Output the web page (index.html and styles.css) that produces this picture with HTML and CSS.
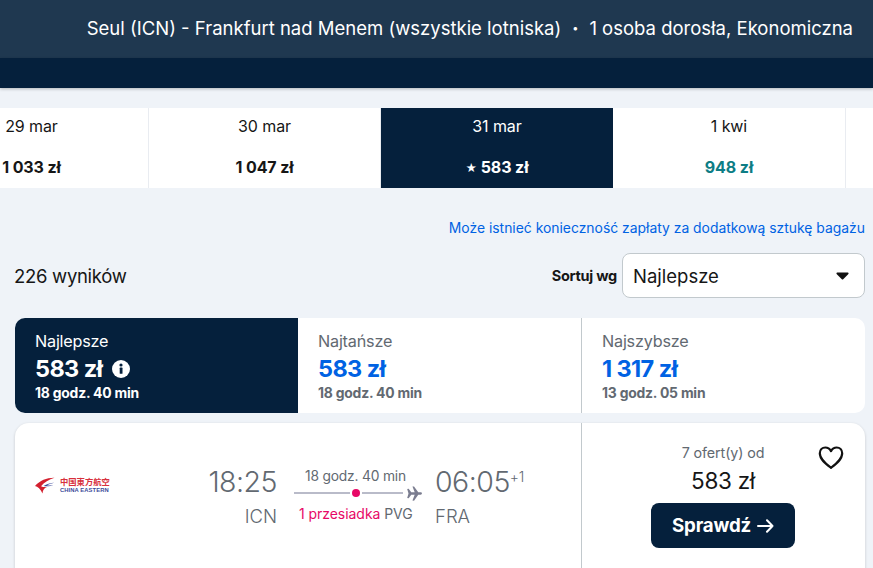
FILE: index.html
```html
<!DOCTYPE html>
<html lang="pl">
<head>
<meta charset="utf-8">
<title>Seul - Frankfurt</title>
<link rel="stylesheet" href="styles.css">
</head>
<body>
<header class="hdr">
  <div class="hdr-top">
    <span>Seul (ICN) - Frankfurt nad Menem (wszystkie lotniska)</span>
    <span class="dot">•</span>
    <span>1 osoba dorosła, Ekonomiczna</span>
  </div>
  <div class="hdr-bottom"></div>
</header>
<nav class="cal">
  <div class="day first"><div class="d">29 mar</div><div class="p">1 033 zł</div></div>
  <div class="day"><div class="d">30 mar</div><div class="p">1 047 zł</div></div>
  <div class="day sel"><div class="d">31 mar</div><div class="p"><span class="star">★</span> 583 zł</div></div>
  <div class="day wide"><div class="d">1 kwi</div><div class="p green">948 zł</div></div>
  <div class="day last"></div>
</nav>
<main class="main">
  <div class="bag"><a class="bag-link">Może istnieć konieczność zapłaty za dodatkową sztukę bagażu</a></div>
  <div class="bar">
    <div class="count">226 wyników</div>
    <div class="sort">
      <span class="sort-l">Sortuj wg</span>
      <div class="select"><span>Najlepsze</span>
        <svg class="caret" width="13" height="8" viewBox="0 0 13 8"><path d="M1.2.6h10.6c.7 0 1 .8.6 1.300L7.200 7.200c-.4.4-1 .4-1.400 0L.6 1.900C.2 1.400.5.6 1.200.6z" fill="#111"/></svg>
      </div>
    </div>
  </div>
  <div class="tabs">
    <div class="tab on">
      <div class="t-name">Najlepsze</div>
      <div class="t-price">583 zł
        <svg class="info" width="18" height="18" viewBox="0 0 18 18"><circle cx="9" cy="9" r="9" fill="#fff"/><rect x="7.700" y="7.600" width="2.800" height="6.200" rx=".6" fill="#05203c"/><circle cx="9" cy="5" r="1.600" fill="#05203c"/></svg>
      </div>
      <div class="t-time">18 godz. 40 min</div>
    </div>
    <div class="tab">
      <div class="t-name">Najtańsze</div>
      <div class="t-price">583 zł</div>
      <div class="t-time">18 godz. 40 min</div>
    </div>
    <div class="tab line">
      <div class="t-name">Najszybsze</div>
      <div class="t-price">1 317 zł</div>
      <div class="t-time">13 godz. 05 min</div>
    </div>
  </div>
  <article class="card">
    <div class="leg">
      <div class="logo">
        <svg class="wing" width="20" height="17" viewBox="0 0 20 17">
          <path d="M19.500.8C12 .6 5 3.500 0 9c2.800.6 5.500 3 7.500 7.500C7.700 13 9.500 10.800 12 10c-2.500.3-4.500 0-6-.8 3-4 8-6.500 13.500-8.400z" fill="#d3202f"/>
          <path d="M19.500 5.800c-4 .2-8 1.400-11 3.300 3.500.6 7 .2 10-1.100-2.600.6-4.800.6-6.500.2 2-1.100 4.800-1.900 7.500-2.400z" fill="#3c4a9a"/>
        </svg>
        <div class="logo-t">
          <div class="cn">中国東方航空</div>
          <div class="en">CHINA EASTERN</div>
        </div>
      </div>
      <div class="times">
        <div class="end right">
          <div class="time">18:25</div>
          <div class="code">ICN</div>
        </div>
        <div class="route">
          <div class="dur">18 godz. 40 min</div>
          <div class="track">
            <span class="seg s1"></span><span class="stop"></span><span class="seg s2"></span>
            <svg class="plane" width="15" height="15" viewBox="0 0 16 16"><path d="M.2 3.200 1.800 3l2.700 3.700H8.200L5.800.6 7.500.4l4.500 6.300h2.500c.9 0 1.400.6 1.400 1.300s-.5 1.300-1.400 1.300H12L7.500 15.600l-1.700-.2 2.400-6.100H4.500L1.800 13l-1.600-.2L1.600 8z" fill="#7b7d90"/></svg>
          </div>
          <div class="stops"><span class="pink">1 przesiadka</span> PVG</div>
        </div>
        <div class="end last-end">
          <div class="time">06:05<sup class="plus">+1</sup></div>
          <div class="code">FRA</div>
        </div>
      </div>
    </div>
    <div class="offer">
      <svg class="heart" width="26" height="25" viewBox="0 0 26 25"><path d="M13 22.800C8 19 1.800 14.500 1.800 8.300c0-3.500 2.600-5.800 5.500-5.800 2.500 0 4.500 1.400 5.700 3.600 1.200-2.200 3.200-3.600 5.700-3.600 2.900 0 5.500 2.300 5.500 5.800 0 6.200-6.200 10.700-11.200 14.500z" fill="none" stroke="#111" stroke-width="2.200" stroke-linejoin="round"/></svg>
      <div class="ofr">7 ofert(y) od</div>
      <div class="ofr-price">583 zł</div>
      <button class="btn">Sprawdź
        <svg width="17" height="14" viewBox="0 0 17 14"><path d="M1 7h14.500M10 1.200 15.500 7 10 12.800" fill="none" stroke="#fff" stroke-width="2" stroke-linecap="round" stroke-linejoin="round"/></svg>
      </button>
    </div>
  </article>
</main>
</body>
</html>
```
FILE: styles.css
```css
* { box-sizing: border-box; }
html, body { margin: 0; height: 568px; overflow: hidden; }
body { background: #eff3f8; font-family: Inter, "Liberation Sans", sans-serif; color: #161616; }
.hdr-top { height: 58px; background: #1f3850; color: #fff; display: flex; justify-content: flex-end; align-items: center; gap: 11px; padding: 0 20px 3px 0; font-size: 18.500px; white-space: nowrap; }
.hdr-top .dot { font-size: 11px; }
.hdr-bottom { height: 30px; background: #05203c; box-shadow: 0 1px 3px rgba(0,0,0,.25); }
.cal { display: flex; margin-top: 20px; height: 80px; background: #fff; }
.day { width: 232px; border-right: 1px solid #e9ecf1; text-align: center; display: flex; flex-direction: column; flex: none; }
.day.first { width: 149px; padding-right: 85px; }
.day.wide { width: 233px; }
.day.last { flex: 1; border-right: 0; }
.day.sel { background: #05203c; color: #fff; border-right: 0; }
.d { font-size: 16px; height: 37px; padding-top: 8px; white-space: nowrap; letter-spacing: -.1px; }
.p { font-size: 16px; font-weight: 700; padding-top: 12px; letter-spacing: -.1px; white-space: nowrap; }
.star { font-size: 11px; vertical-align: 1px; }
.green { color: #0d7d85; }
.main { padding: 0 8px 0 15px; }
.bag { text-align: right; padding-top: 31px; font-size: 13.900px; line-height: 18px; }
.bag-link { color: #0062e3; }
.bar { display: flex; justify-content: space-between; align-items: center; margin-top: 16px; height: 45px; }
.count { font-size: 18.500px; letter-spacing: -.3px; margin-left: -1px; }
.sort { display: flex; align-items: center; gap: 5px; }
.sort-l { font-size: 14.500px; font-weight: 700; letter-spacing: -.25px; }
.select { width: 243px; height: 45px; background: #fff; border: 1px solid #c2c9cd; border-radius: 8px; display: flex; align-items: center; justify-content: space-between; padding: 0 15px 0 10px; font-size: 18.500px; }
.tabs { display: flex; margin-top: 20px; height: 95px; background: #fff; border-radius: 10px; overflow: hidden; }
.tab { flex: 1; padding: 13px 19px 0 20px; color: #626971; min-width: 0; }
.tab.on { background: #05203c; color: #fff; flex: none; width: 283px; }
.tab:nth-child(2) { flex: none; width: 283px; }
.tab.line { border-left: 1px solid #c2c9cd; }
.t-name { font-size: 16.200px; line-height: 20px; letter-spacing: -.2px; }
.t-price { font-size: 23.500px; font-weight: 700; line-height: 28px; margin-top: 4px; color: #0062e3; display: flex; align-items: center; gap: 10px; letter-spacing: -.6px; }
.on .t-price { color: #fff; }
.t-time { font-size: 13.900px; font-weight: 700; line-height: 18px; margin-top: 1px; letter-spacing: -.2px; }
.card { display: flex; margin-top: 10px; height: 160px; background: #fff; border-radius: 14px; box-shadow: 0 1px 3px rgba(37,32,31,.2); overflow: hidden; }
.leg { width: 567px; flex: none; border-right: 1px solid #c2c9cd; display: flex; padding: 0 0 0 20px; }
.logo { margin-top: 54px; flex: none; width: 76px; height: 17px; display: flex; gap: 5px; }
.logo-t { width: 51px; }
.cn { font: 700 8.300px/9px "Noto Sans CJK SC", sans-serif; color: #d8303c; white-space: nowrap; }
.en { font: 700 5.800px/6px "Liberation Sans", sans-serif; color: #3c4a9a; letter-spacing: .1px; white-space: nowrap; margin-top: 1px; }
.times { display: flex; margin: 39px 0 0 94px; }
.end.right { text-align: right; width: 72px; margin-right: 17px; }
.last-end { margin-left: 11px; width: 100px; }
.time { font-size: 28.500px; line-height: 40px; color: #626971; white-space: nowrap; font-weight: 300; letter-spacing: -.5px; }
.plus { font-size: 14px; vertical-align: 10px; line-height: 0; letter-spacing: -.3px; }
.code { font-size: 18.500px; line-height: 28px; color: #626971; font-weight: 300; }
.route { width: 130px; font-size: 14px; color: #626971; }
.dur { font-size: 13.800px; line-height: 18px; margin-top: 5px; white-space: nowrap; text-align: center; padding-right: 7px; letter-spacing: -.2px; }
.track { display: flex; align-items: center; height: 16px; }
.seg { height: 2px; background: #b9bbc9; display: block; }
.s1 { width: 56px; }
.s2 { width: 41px; }
.stop { width: 8px; height: 8px; border-radius: 50%; background: #e70866; margin: 0 2px; }
.plane { margin-left: 4px; }
.stops { line-height: 18px; margin-top: 4px; white-space: nowrap; padding-left: 5px; letter-spacing: -.05px; }
.pink { color: #e70866; }
.offer { flex: 1; text-align: center; position: relative; padding: 20px 1px 0 0; }
.ofr { font-size: 14.300px; line-height: 20px; color: #626971; letter-spacing: -.1px; }
.ofr-price { font-size: 22.500px; line-height: 30px; margin-top: 3px; color: #161616; letter-spacing: -.3px; }
.btn { margin-top: 7px; width: 144px; height: 45px; background: #05203c; color: #fff; border: 0; border-radius: 8px; font: 700 18.700px Inter, "Liberation Sans", sans-serif; letter-spacing: -.2px; display: inline-flex; align-items: center; justify-content: center; gap: 6px; }
.heart { position: absolute; top: 22px; right: 21px; }
```
